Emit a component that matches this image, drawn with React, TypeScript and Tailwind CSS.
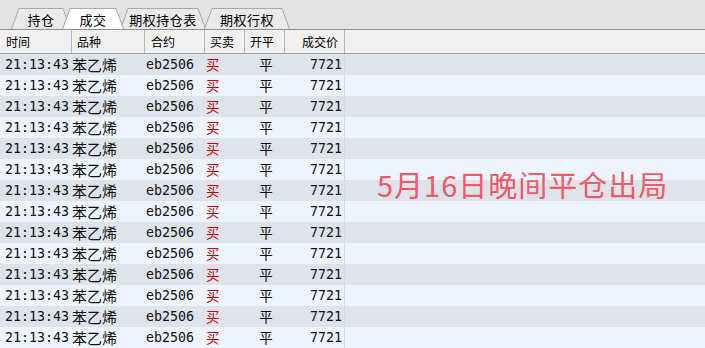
import React from "react";

const CJK = '"Noto Sans CJK SC", "Noto Sans", sans-serif';
const MONO = '"DejaVu Sans Mono", "Noto Sans CJK SC", monospace';

function Tab({ label, w, active, className }: { label: string; w: number; active?: boolean; className?: string }) {
  return (
    <div className={`relative h-[21px] flex items-center justify-center shrink-0 ${active ? "z-10" : "z-0"} ${className ?? ""}`} style={{ width: w }}>
      <svg className="absolute inset-0" width={w} height={21} viewBox={`0 0 ${w} 21`}>
        <path
          d={`M0.5,21 L8,0.5 L${w - 8},0.5 L${w - 0.5},21`}
          fill={active ? "#ffffff" : "#e9e9e9"}
          stroke="#a9a9a9"
          strokeWidth={1}
        />
      </svg>
      <span className="relative text-[13px] text-black leading-none pt-[1px] tracking-[0.5px]">{label}</span>
    </div>
  );
}

const rows = Array.from({ length: 14 });

export default function App() {
  return (
    <div className="relative w-[705px] h-[348px] overflow-hidden bg-[#edf4fd]" style={{ fontFamily: CJK }}>
      {/* tab strip */}
      <div className="h-[30px] bg-[#e2e2e2] border-b border-[#8f8f8f] flex items-end pl-[11px]">
        <Tab label="持仓" w={60} />
        <Tab label="成交" w={62} active className="ml-[-9px]" />
        <Tab label="期权持仓表" w={86} className="ml-[-4px]" />
        <Tab label="期权行权" w={86} className="ml-[-2px]" />
      </div>

      {/* header */}
      <div className="h-[24px] bg-[#f0f0f0] border-b border-[#a5a5a5] flex text-[12px] text-black">
        <div className="w-[72px] border-r border-[#b4b4b4] pl-[6px] flex items-center">时间</div>
        <div className="w-[73px] border-r border-[#b4b4b4] pl-[5px] flex items-center">品种</div>
        <div className="w-[60px] border-r border-[#b4b4b4] pl-[6px] flex items-center">合约</div>
        <div className="w-[40px] border-r border-[#b4b4b4] pl-[5px] flex items-center">买卖</div>
        <div className="w-[40px] border-r border-[#b4b4b4] pl-[5px] flex items-center">开平</div>
        <div className="w-[60px] border-r border-[#b4b4b4] pr-[6px] flex items-center justify-end">成交价</div>
      </div>

      {/* rows */}
      <div className="flex flex-col">
        {rows.map((_, i) => (
          <div key={i} className={`h-[21px] flex items-center ${i % 2 === 0 ? "bg-[#dee3ea]" : "bg-[#edf4fd]"}`}>
            <div className="w-[72px] pl-[5px] text-[13.3px] text-[#111] whitespace-nowrap" style={{ fontFamily: MONO }}>21:13:43</div>
            <div className="w-[73px] text-[15px] text-[#111] leading-none whitespace-nowrap">苯乙烯</div>
            <div className="w-[60px] pl-[1px] text-[13.3px] text-[#111]" style={{ fontFamily: MONO }}>eb2506</div>
            <div className="w-[40px] pl-[1px] text-[13.5px] text-[#cc0000] leading-none">买</div>
            <div className="w-[40px] text-center text-[13.5px] text-[#111] leading-none pl-[2px]">平</div>
            <div className="w-[60px] h-full border-r border-[#d4dbe4] pr-[2px] flex items-center justify-end text-[13.3px] text-[#111]" style={{ fontFamily: MONO }}>7721</div>
          </div>
        ))}
      </div>

      {/* overlay annotation */}
      <div className="absolute left-[377px] top-[170px] text-[29px] leading-none text-[#ee5a68] tracking-[1px] whitespace-nowrap">
        5月16日晚间平仓出局
      </div>
    </div>
  );
}
